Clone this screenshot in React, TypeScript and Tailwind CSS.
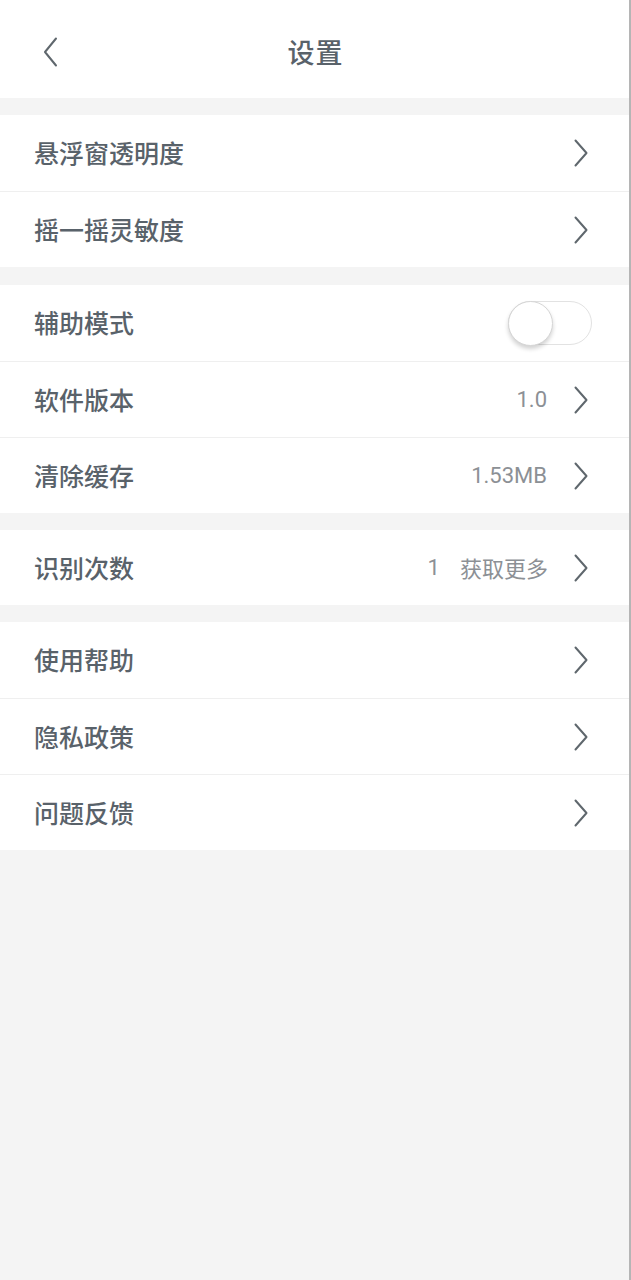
import { useState } from "react"

const font = { fontFamily: 'Roboto, "Noto Sans CJK SC", "Noto Sans", sans-serif' }
const cjk = { fontFamily: '"Noto Sans CJK SC", "Noto Sans", sans-serif' }

function Chevron() {
  return (
    <svg width="16" height="28" viewBox="0 0 16 28" fill="none" className="shrink-0">
      <path d="M3.5 1.5 L14.5 14 L3.5 26.5" stroke="#5f676d" strokeWidth="2" strokeLinecap="round" strokeLinejoin="round" />
    </svg>
  )
}

function Row({ label, value, extra, h = "h-[76px]", first = false, children }: {
  label: string
  value?: string
  extra?: string
  h?: string
  first?: boolean
  children?: React.ReactNode
}) {
  return (
    <div className={`flex items-center pl-[34px] pr-[41px] bg-white ${h} ${first ? "" : "border-t border-[#efefef]"}`}>
      <span className="flex-1 text-[25px] font-medium text-[#59626a]" style={cjk}>{label}</span>
      {value && <span className={`text-[22px] text-[#8c9095] ${extra ? "mr-[20px]" : "mr-[25px]"}`}>{value}</span>}
      {extra && <span className="text-[22px] text-[#8c9095] mr-[24px]" style={cjk}>{extra}</span>}
      {children ?? <Chevron />}
    </div>
  )
}

function Toggle() {
  const [on, setOn] = useState(false)
  return (
    <button
      onClick={() => setOn(!on)}
      className={`relative w-[84px] h-[44px] rounded-full border border-[#e2e2e2] -mr-[4px] ${on ? "bg-[#4cd964]" : "bg-white"}`}
    >
      <span
        className={`absolute top-[-1px] w-[45px] h-[45px] rounded-full bg-white border border-[#d6d6d6] shadow-[0_3px_4px_rgba(0,0,0,0.18)] ${on ? "right-[-1px]" : "left-[-1px]"}`}
      />
    </button>
  )
}

export default function App() {
  return (
    <div className="min-h-[1280px] bg-[#f4f4f4] border-r-2 border-[#b5b5b5]" style={font}>
      {/* header */}
      <div className="h-[98px] bg-white flex items-center relative">
        <button className="absolute left-[42px] top-[37px]">
          <svg width="16" height="30" viewBox="0 0 16 30" fill="none">
            <path d="M14 1.5 L3 15 L14 28.5" stroke="#5f676d" strokeWidth="2" strokeLinecap="round" strokeLinejoin="round" />
          </svg>
        </button>
        <h1 className="flex-1 text-center text-[27px] font-medium text-[#59626a] tracking-[1px] pl-[2px] pt-[6px]" style={cjk}>设置</h1>
      </div>

      <div className="mt-[17px]">
        <Row label="悬浮窗透明度" first />
        <Row label="摇一摇灵敏度" />
      </div>

      <div className="mt-[18px]">
        <Row label="辅助模式" first>
          <Toggle />
        </Row>
        <Row label="软件版本" value="1.0" />
        <Row label="清除缓存" value="1.53MB" />
      </div>

      <div className="mt-[17px]">
        <Row label="识别次数" value="1" extra="获取更多" h="h-[75px]" first />
      </div>

      <div className="mt-[17px]">
        <Row label="使用帮助" first />
        <Row label="隐私政策" />
        <Row label="问题反馈" />
      </div>
    </div>
  )
}
